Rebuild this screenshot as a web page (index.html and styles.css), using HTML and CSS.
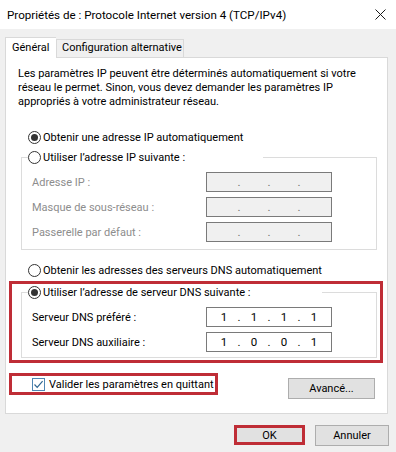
FILE: index.html
```html
<!DOCTYPE html>
<html lang="fr">
<head>
<meta charset="utf-8">
<title>Propriétés de : Protocole Internet version 4 (TCP/IPv4)</title>
<link rel="stylesheet" href="styles.css">
</head>
<body>
<div class="window">
  <div class="titlebar">
    <span class="title">Propriétés de : Protocole Internet version 4 (TCP/IPv4)</span>
    <svg class="close" width="11" height="11" viewBox="0 0 11 11"><path d="M0.5 0.5 L10.5 10.5 M10.5 0.5 L0.5 10.5" stroke="#1a1a1a" stroke-width="1" fill="none"/></svg>
  </div>
  <div class="client">
    <div class="tabs">
      <div class="tab active">Général</div>
      <div class="tab">Configuration alternative</div>
    </div>
    <div class="panel">
      <p class="desc">Les paramètres IP peuvent être déterminés automatiquement si votre réseau le permet. Sinon, vous devez demander les paramètres IP appropriés à votre administrateur réseau.</p>

      <div class="opt first"><span class="radio on"></span><span>Obtenir une adresse IP automatiquement</span></div>

      <fieldset class="group ip">
        <legend class="legend ip-leg"><span class="radio"></span><span>Utiliser l’adresse IP suivante :</span></legend>
        <div class="field disabled"><span class="label">Adresse IP :</span><div class="ipbox off"><span class="seg"></span><span class="dot">.</span><span class="seg"></span><span class="dot">.</span><span class="seg"></span><span class="dot">.</span><span class="seg"></span></div></div>
        <div class="field disabled"><span class="label">Masque de sous-réseau :</span><div class="ipbox off"><span class="seg"></span><span class="dot">.</span><span class="seg"></span><span class="dot">.</span><span class="seg"></span><span class="dot">.</span><span class="seg"></span></div></div>
        <div class="field disabled"><span class="label">Passerelle par défaut :</span><div class="ipbox off"><span class="seg"></span><span class="dot">.</span><span class="seg"></span><span class="dot">.</span><span class="seg"></span><span class="dot">.</span><span class="seg"></span></div></div>
      </fieldset>

      <div class="opt dnsauto"><span class="radio"></span><span>Obtenir les adresses des serveurs DNS automatiquement</span></div>

      <div class="redbox dnsbox">
        <fieldset class="group dns">
          <legend class="legend dns-leg"><span class="radio on"></span><span>Utiliser l’adresse de serveur DNS suivante :</span></legend>
          <div class="field"><span class="label">Serveur DNS préféré :</span><div class="ipbox"><span class="seg">1</span><span class="dot">.</span><span class="seg">1</span><span class="dot">.</span><span class="seg">1</span><span class="dot">.</span><span class="seg">1</span></div></div>
          <div class="field"><span class="label">Serveur DNS auxiliaire :</span><div class="ipbox"><span class="seg">1</span><span class="dot">.</span><span class="seg">0</span><span class="dot">.</span><span class="seg">0</span><span class="dot">.</span><span class="seg">1</span></div></div>
        </fieldset>
      </div>

      <div class="checkrow">
        <div class="redbox checkbox-box">
          <span class="check"><svg width="11" height="11" viewBox="0 0 11 11"><path d="M1.5 5.5 L4.2 8.3 L9.6 2.2" stroke="#2f6792" stroke-width="1.2" fill="none"/></svg></span>
          <span>Valider les paramètres en quittant</span>
        </div>
        <button class="btn advanced">Avancé...</button>
      </div>
    </div>
    <div class="actions">
      <button class="btn ok">OK</button>
      <button class="btn cancel">Annuler</button>
    </div>
  </div>
</div>
</body>
</html>
```
FILE: styles.css
```css
* { box-sizing: border-box; }
html, body { margin: 0; padding: 0; }
body {
  font-family: Roboto, "Liberation Sans", sans-serif;
  font-size: 11px;
  color: #000;
  background: #f0f0f0;
}
.window {
  width: 396px;
  height: 452px;
  background: #f0f0f0;
  display: flex;
  flex-direction: column;
}
.titlebar {
  height: 29px;
  background: #fff;
  display: flex;
  align-items: center;
  justify-content: space-between;
  padding: 0 10px 0 7px;
}
.title { font-size: 11.6px; color: #000; }

.client {
  flex: 1;
  padding: 8px 8px 0 5px;
  display: flex;
  flex-direction: column;
}
.tabs {
  display: flex;
  align-items: flex-end;
  height: 20px;
  position: relative;
  z-index: 1;
}
.tab {
  height: 18px;
  line-height: 16px;
  padding: 0 4px 0 4px;
  border: 1px solid #d9d9d9;
  border-bottom: none;
  background: #f0f0f0;
  white-space: nowrap;
}
.tab.active {
  height: 21px;
  margin-bottom: -1px;
  width: 51px;
  padding: 0 6px;
  line-height: 19px;
  background: #fff;
  border-right: none;
}
.tab + .tab { width: 128px; padding-left: 5px; }

.panel {
  height: 357px;
  background: #fff;
  border: 1px solid #d9d9d9;
  padding: 9px 12px 0 12px;
}
.desc {
  margin: 0;
  line-height: 14px;
  width: 340px;
}
.opt {
  display: flex;
  align-items: center;
  height: 16px;
  white-space: nowrap;
}
.opt.first { margin: 20px 0 0 10px; }
.opt.dnsauto { margin: 12px 0 0 10px; }

.radio {
  width: 13px;
  height: 13px;
  border: 1px solid #333;
  border-radius: 50%;
  background: #fff;
  margin-right: 2px;
  display: inline-flex;
  align-items: center;
  justify-content: center;
  flex: none;
}
.radio.on::after {
  content: "";
  width: 7px;
  height: 7px;
  border-radius: 50%;
  background: #333;
}

.group {
  margin: 5px -2px 0 3px;
  border: 1px solid #dcdcdc;
  padding: 0 0 0 10px;
  min-width: 0;
}
.legend {
  display: flex;
  align-items: center;
  height: 14px;
  padding: 0;
  margin-left: -4px;
  background: #fff;
  white-space: nowrap;
}
.ip-leg { width: 235px; }
.dns-leg { width: 294px; }

.ip { padding-top: 8px; padding-bottom: 7px; }
.field {
  display: flex;
  align-items: center;
  height: 20px;
}
.field + .field { margin-top: 5px; }
.field .label { width: 174px; }
.field.disabled .label { color: #8d8d8d; }

.ipbox {
  width: 126px;
  height: 20px;
  border: 1px solid #7a7a7a;
  background: #fff;
  display: flex;
  align-items: center;
  padding-left: 4px;
  font-size: 11.5px;
}
.ipbox.off { background: #f0f0f0; color: #6d6d6d; }
.seg { width: 26px; text-align: center; }
.dot { width: 4px; text-align: center; }

.redbox { border: 3px solid #bf2d36; }
.dnsbox {
  margin: 3px -8px 0 -9px;
  height: 82px;
  padding: 1px 3px 0 9px;
}
.dnsbox .group { margin: 0; }
.dns { padding-top: 8px; padding-bottom: 5px; }

.checkrow {
  display: flex;
  justify-content: space-between;
  align-items: flex-start;
  margin: 10px 0 0 -9px;
}
.checkbox-box {
  width: 209px;
  height: 22px;
  display: flex;
  align-items: center;
  padding-left: 20px;
  white-space: nowrap;
}
.check {
  width: 13px;
  height: 13px;
  border: 1px solid #4f86b3;
  background: #fff;
  margin-right: 4px;
  display: inline-flex;
  align-items: center;
  justify-content: center;
}

.btn {
  font: inherit;
  color: #000;
  background: #e1e1e1;
  border: 1px solid #adadad;
  padding: 0;
  margin: 0;
}
.advanced {
  width: 87px;
  height: 21px;
  margin-top: 5px;
}

.actions {
  display: flex;
  justify-content: flex-end;
  gap: 10px;
  padding: 11px 0 0 0;
  margin-right: -1px;
}
.ok {
  width: 71px;
  height: 20px;
  border: 3px solid #bf2d36;
}
.cancel {
  width: 74px;
  height: 21px;
}
```
